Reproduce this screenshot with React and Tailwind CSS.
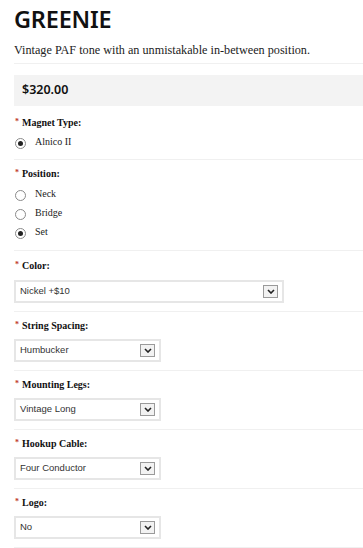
import React from 'react';

const serif = { fontFamily: '"Liberation Serif", "Times New Roman", serif' };
const arial = { fontFamily: '"Liberation Sans", Arial, sans-serif' };
const heading = { fontFamily: '"Noto Sans", "Open Sans", sans-serif' };

function Label({ children }) {
  return (
    <div className="h-[14px] flex items-center text-[10px] font-bold text-[#111]" style={serif}>
      <span className="text-[#c0392b] text-[8px] -mt-[1px] ml-[1px] mr-[3px]">*</span>
      {children}
    </div>
  );
}

function Radio({ label, checked }) {
  return (
    <div className="flex items-center h-[19px]">
      <span className="w-[11px] h-[11px] ml-[1px] mt-[2px] rounded-full border border-[#8a8a8a] bg-white flex items-center justify-center">
        {checked && <span className="w-[5px] h-[5px] rounded-full bg-[#222]" />}
      </span>
      <span className="ml-[9px] text-[10px] text-[#222] leading-none -mt-[2px]" style={serif}>
        {label}
      </span>
    </div>
  );
}

function Select({ value, wide }) {
  return (
    <div
      className={`${wide ? 'w-[270px]' : 'w-[147px]'} h-[23px] border-2 border-[#e6e6e6] bg-white flex items-center justify-between pl-[4px] pr-[4px]`}
    >
      <span className="text-[9.5px] text-[#333]" style={arial}>
        {value}
      </span>
      <span className="w-[15px] h-[13px] border border-[#9a9a9a] bg-[#f2f2f2] flex items-center justify-center">
        <svg width="8" height="5" viewBox="0 0 8 5">
          <path d="M1 1 L4 4 L7 1" fill="none" stroke="#222" strokeWidth="1.6" />
        </svg>
      </span>
    </div>
  );
}

function Section({ label, children, first }) {
  return (
    <div className={`border-b border-[#f0f0f0] ${first ? 'pt-[7px]' : 'pt-[6px]'} pb-[8px] pr-[14px]`}>
      <Label>{label}</Label>
      <div className={first ? 'mt-[8px]' : 'mt-[7px]'}>{children}</div>
    </div>
  );
}

export default function App() {
  return (
    <div className="w-[363px] h-[548px] bg-white overflow-hidden pl-[14px]">
      <h1
        className="h-[35px] pt-[7px] text-[23.5px] font-semibold leading-[24px] tracking-[-0.2px] text-[#111]"
        style={heading}
      >
        GREENIE
      </h1>
      <p className="mt-[7px] text-[12.2px] text-[#222] leading-[16px]" style={serif}>
        Vintage PAF tone with an unmistakable in-between position.
      </p>
      <div className="mt-[5px] border-b border-[#f0f0f0]" />
      <div className="mt-[11px] h-[31px] bg-[#f3f3f3] flex items-center pl-[8px]">
        <span className="text-[12.5px] font-semibold text-[#111]" style={heading}>
          $320.00
        </span>
      </div>
      <div className="border-b border-[#f0f0f0] pt-[9px] pb-[7px]">
        <Label>Magnet Type:</Label>
        <div className="mt-[4px]">
          <Radio label="Alnico II" checked />
        </div>
      </div>
      <div className="border-b border-[#f0f0f0] pt-[6px] pb-[8px]">
        <Label>Position:</Label>
        <div className="mt-[5px]">
          <Radio label="Neck" />
          <Radio label="Bridge" />
          <Radio label="Set" checked />
        </div>
      </div>
      <Section label="Color:" first>
        <Select value="Nickel +$10" wide />
      </Section>
      <Section label="String Spacing:">
        <Select value="Humbucker" />
      </Section>
      <Section label="Mounting Legs:">
        <Select value="Vintage Long" />
      </Section>
      <Section label="Hookup Cable:">
        <Select value="Four Conductor" />
      </Section>
      <Section label="Logo:">
        <Select value="No" />
      </Section>
    </div>
  );
}
